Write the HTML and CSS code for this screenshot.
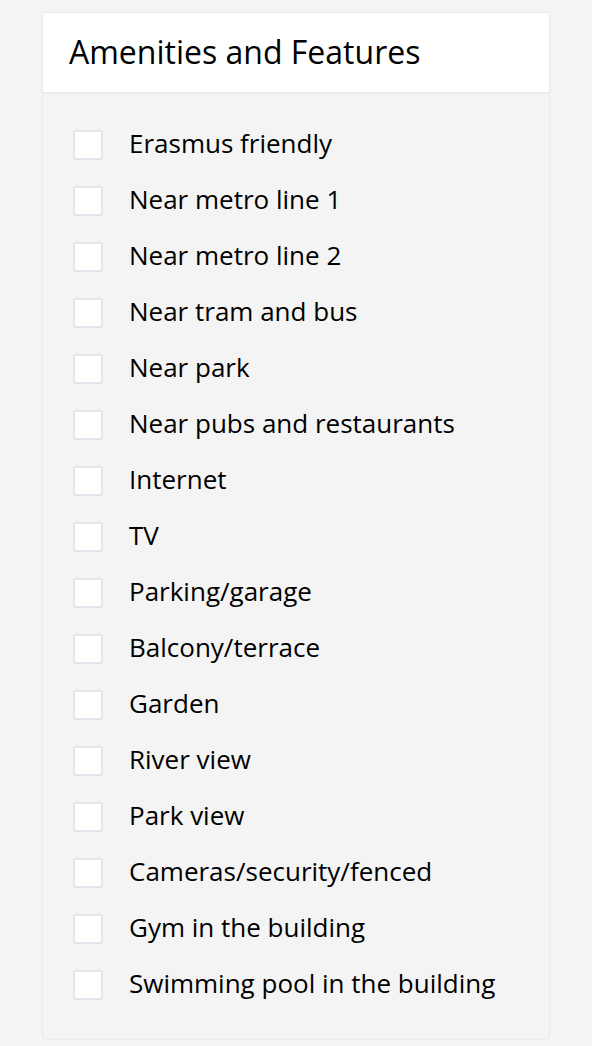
FILE: index.html
```html
<!DOCTYPE html>
<html lang="en">
<head>
    <meta charset="UTF-8">
    <meta name="viewport" content="width=device-width, initial-scale=1.0">
    <title>Amenities and Features</title>
    <link rel="stylesheet" href="styles.css">
</head>
<body>
    <div class="panel">
        <div class="panel-header">
            <h2>Amenities and Features</h2>
        </div>
        <div class="panel-body">
            <label class="check-row"><input type="checkbox"><span class="box"></span><span>Erasmus friendly</span></label>
            <label class="check-row"><input type="checkbox"><span class="box"></span><span>Near metro line 1</span></label>
            <label class="check-row"><input type="checkbox"><span class="box"></span><span>Near metro line 2</span></label>
            <label class="check-row"><input type="checkbox"><span class="box"></span><span>Near tram and bus</span></label>
            <label class="check-row"><input type="checkbox"><span class="box"></span><span>Near park</span></label>
            <label class="check-row"><input type="checkbox"><span class="box"></span><span>Near pubs and restaurants</span></label>
            <label class="check-row"><input type="checkbox"><span class="box"></span><span>Internet</span></label>
            <label class="check-row"><input type="checkbox"><span class="box"></span><span>TV</span></label>
            <label class="check-row"><input type="checkbox"><span class="box"></span><span>Parking/garage</span></label>
            <label class="check-row"><input type="checkbox"><span class="box"></span><span>Balcony/terrace</span></label>
            <label class="check-row"><input type="checkbox"><span class="box"></span><span>Garden</span></label>
            <label class="check-row"><input type="checkbox"><span class="box"></span><span>River view</span></label>
            <label class="check-row"><input type="checkbox"><span class="box"></span><span>Park view</span></label>
            <label class="check-row"><input type="checkbox"><span class="box"></span><span>Cameras/security/fenced</span></label>
            <label class="check-row"><input type="checkbox"><span class="box"></span><span>Gym in the building</span></label>
            <label class="check-row"><input type="checkbox"><span class="box"></span><span>Swimming pool in the building</span></label>
        </div>
    </div>
</body>
</html>
```

FILE: styles.css
```css
* {
    margin: 0;
    padding: 0;
    box-sizing: border-box;
}

body {
    font-family: 'Open Sans', 'Liberation Sans', sans-serif;
    background: #f4f4f4;
    color: #000;
    padding: 12px 42px 0 42px;
}

.panel {
    width: 508px;
    background: #f4f4f4;
    border: 1px solid #ebebeb;
    border-radius: 3px;
}

.panel-header {
    background: #fff;
    height: 81px;
    border-bottom: 2px solid #ebebeb;
    display: flex;
    align-items: center;
    padding: 0 26px;
}

.panel-header h2 {
    font-weight: 400;
    font-size: 32px;
    line-height: 1;
    margin-top: -1px;
}

.panel-body {
    padding: 23px 30px 26px 30px;
}

.check-row {
    display: flex;
    align-items: center;
    height: 56px;
    font-size: 26px;
    line-height: 1;
    cursor: pointer;
}

.check-row span:last-child {
    margin-top: -5px;
}

.check-row input {
    display: none;
}

.box {
    width: 30px;
    height: 30px;
    background: #fff;
    border: 2px solid #e1e7ec;
    border-radius: 3px;
    margin-right: 26px;
    flex-shrink: 0;
}
```
